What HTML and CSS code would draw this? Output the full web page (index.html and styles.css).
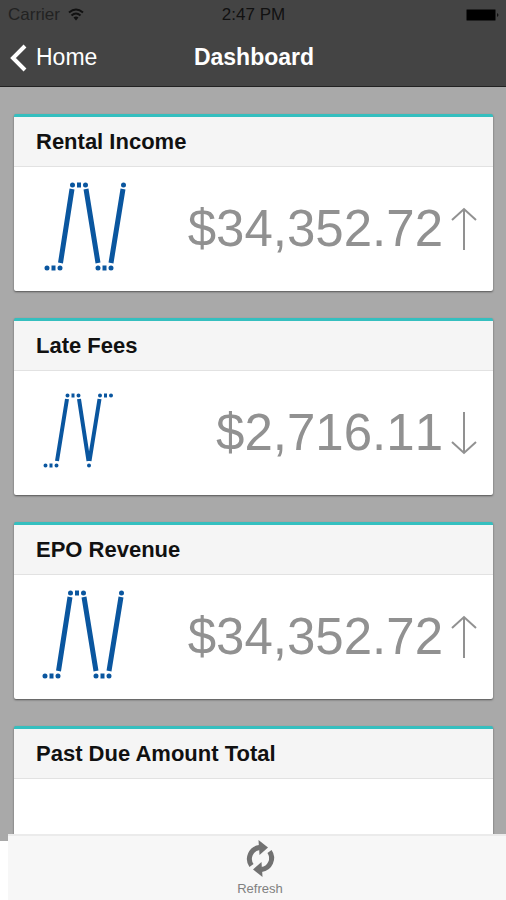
FILE: index.html
```html
<!DOCTYPE html>
<html lang="en">
<head>
    <meta charset="UTF-8">
    <meta name="viewport" content="width=device-width, initial-scale=1.0">
    <title>Dashboard</title>
    <link rel="stylesheet" href="styles.css">
</head>
<body>
    <header class="header">
        <div class="status-bar">
            <div class="carrier">
                <span>Carrier</span>
                <svg width="16" height="13" viewBox="0 0 16 13" fill="none" stroke="#111" stroke-width="2">
                    <path d="M1 4.5Q8 -1.5 15 4.5M3.5 7.5Q8 3.5 12.5 7.5"/>
                    <path d="M5.5 9.5Q8 7.5 10.5 9.5L8 12.5Z" fill="#111" stroke="none"/>
                </svg>
            </div>
            <span class="time">2:47 PM</span>
            <div class="battery">
                <svg width="33" height="12" viewBox="0 0 33 12">
                    <rect x="0.5" y="0.5" width="29" height="11" rx="1" fill="#000" stroke="#222"/>
                    <path d="M31 4Q34 6 31 8Z" fill="#111"/>
                </svg>
            </div>
        </div>
        <nav class="nav-bar">
            <a href="#" class="back">
                <svg width="18" height="28" viewBox="0 0 18 28" fill="none" stroke="#fff" stroke-width="4">
                    <path d="M15 2L3 14L15 26"/>
                </svg>
                <span>Home</span>
            </a>
            <h1>Dashboard</h1>
        </nav>
    </header>

    <main class="content">
        <section class="card">
            <h2>Rental Income</h2>
            <div class="card-body">
                <svg class="chart" width="96" height="104" viewBox="0 0 96 104">
                    <path class="line" d="M24.5 86L36 12M50 12L62 86M75 86L87 12M15.5 91h4M41 8h4M66.5 91h4"/>
                    <path class="dots" d="M11 91h0M24 91h0M36.5 8h0M49.5 8h0M62 91h0M75 91h0M87.5 8h0"/>
                </svg>
                <div class="amount">
                    <span>$34,352.72</span>
                    <svg class="arrow" width="26" height="42" viewBox="0 0 26 42"><path d="M13 42V1M1 12L13 1L25 12"/></svg>
                </div>
            </div>
        </section>

        <section class="card">
            <h2>Late Fees</h2>
            <div class="card-body">
                <svg class="chart small" width="96" height="104" viewBox="0 0 96 104">
                    <path class="line" d="M21 80L31 18M43 18L52.5 80M53.5 80L63.5 18M13.5 84.5h3M35.5 14.5h3M68 14.5h3"/>
                    <path class="dots" d="M9.5 84.5h0M20.5 84.5h0M31.5 14.5h0M42.5 14.5h0M53 84.5h0M64 14.5h0M75 14.5h0"/>
                </svg>
                <div class="amount">
                    <span>$2,716.11</span>
                    <svg class="arrow" width="26" height="42" viewBox="0 0 26 42"><path d="M13 0V41M1 30L13 41L25 30"/></svg>
                </div>
            </div>
        </section>

        <section class="card">
            <h2>EPO Revenue</h2>
            <div class="card-body">
                <svg class="chart" width="96" height="104" viewBox="0 0 96 104">
                    <path class="line" d="M22.5 86L34 12M48 12L60 86M73 86L85 12M13.5 91h4M39 8h4M64.5 91h4"/>
                    <path class="dots" d="M9 91h0M22 91h0M34.5 8h0M47.5 8h0M60 91h0M73 91h0M85.5 8h0"/>
                </svg>
                <div class="amount">
                    <span>$34,352.72</span>
                    <svg class="arrow" width="26" height="42" viewBox="0 0 26 42"><path d="M13 42V1M1 12L13 1L25 12"/></svg>
                </div>
            </div>
        </section>

        <section class="card">
            <h2>Past Due Amount Total</h2>
            <div class="card-body"></div>
        </section>
    </main>

    <footer class="toolbar">
        <button type="button" class="refresh">
            <svg width="29" height="37" viewBox="0 0 29 37">
                <g id="half">
                    <path d="M5.5 25.5A11.5 11.5 0 0 1 13.5 7.5" fill="none" stroke="#717171" stroke-width="5"/>
                    <path d="M12.5 0L22 7.5L13.5 15Z" fill="#717171"/>
                </g>
                <use href="#half" transform="rotate(180 14.5 18.5)"/>
            </svg>
            <span>Refresh</span>
        </button>
    </footer>
</body>
</html>
```

FILE: styles.css
```css
* {
    box-sizing: border-box;
}
body {
    font-family: "Liberation Sans", Arial, sans-serif;
    background: #fff;
    height: 100vh;
    margin: 0;
    display: flex;
    flex-direction: column;
    overflow: hidden;
}
svg {
    display: block;
    flex-shrink: 0;
    overflow: visible;
}

/* header */
.header {
    flex-shrink: 0;
    background: #444;
    border-bottom: 1px solid #222;
}
.status-bar {
    display: grid;
    grid-template-columns: 1fr auto 1fr;
    align-items: center;
    height: 29px;
    padding: 0 7px 0 8px;
    font-size: 17px;
    color: #111;
}
.carrier {
    display: flex;
    align-items: center;
    gap: 8px;
    color: #222;
}
.battery {
    justify-self: end;
}
.nav-bar {
    display: grid;
    grid-template-columns: 1fr auto 1fr;
    align-items: center;
    height: 57px;
    padding: 0 8px 0 10px;
    color: #fff;
    font-size: 23px;
}
.back {
    display: flex;
    align-items: center;
    gap: 8px;
    color: #fff;
    text-decoration: none;
}
.nav-bar h1 {
    margin: 0;
    font-size: 23px;
}

/* cards */
.content {
    flex: 1;
    min-height: 0;
    overflow: hidden;
    display: flex;
    flex-direction: column;
    gap: 27px;
    padding: 27px 13px 0 14px;
    background: #a9a9a9;
}
.card {
    flex-shrink: 0;
    background: #fff;
    border-top: 3px solid #35bfbf;
    border-radius: 2px;
    box-shadow: 0 1px 2px rgba(0, 0, 0, 0.5);
}
.card h2 {
    margin: 0;
    padding: 0 22px;
    font-size: 22px;
    line-height: 49px;
    color: #111;
    background: #f5f5f5;
    border-bottom: 1px solid #e2e2e2;
}
.card-body {
    display: flex;
    align-items: center;
    justify-content: space-between;
    height: 124px;
    padding: 0 16px 0 22px;
}
.line {
    fill: none;
    stroke: #0a569f;
    stroke-width: 5;
}
.dots {
    fill: none;
    stroke: #0a569f;
    stroke-width: 5;
    stroke-linecap: round;
}
.small .line,
.small .dots {
    stroke-width: 4;
}
.amount {
    display: flex;
    align-items: center;
    gap: 8px;
    font-size: 51px;
    font-kerning: none;
    line-height: 56px;
    color: #919191;
}
.arrow {
    fill: none;
    stroke: #919191;
    stroke-width: 2;
}

/* bottom toolbar, overlaps the end of the list */
.toolbar {
    flex-shrink: 0;
    display: flex;
    justify-content: center;
    height: 66px;
    margin: -7px 0 0 8px;
    padding-left: 6px;
    background: #f7f7f7;
    border-top: 2px solid #ebebeb;
    z-index: 1;
}
.refresh {
    display: flex;
    flex-direction: column;
    align-items: center;
    gap: 4px;
    padding: 4px 0 0;
    border: none;
    background: none;
    font-family: inherit;
    font-size: 13px;
    line-height: 15px;
    color: #808080;
    cursor: pointer;
}
```
